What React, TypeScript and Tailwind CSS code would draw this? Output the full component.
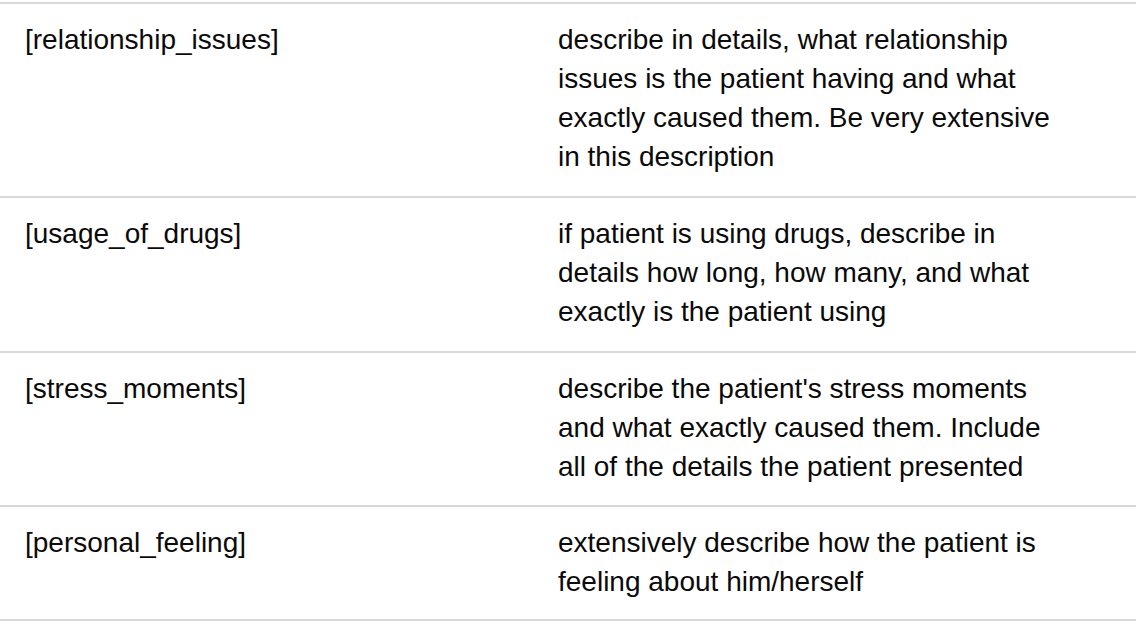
import React from 'react'

interface Field {
  key: string
  hint: string
  height: string
}

const fields: Field[] = [
  {
    key: '[relationship_issues]',
    hint: 'describe in details, what relationship issues is the patient having and what exactly caused them. Be very extensive in this description',
    height: 'h-[194px]',
  },
  {
    key: '[usage_of_drugs]',
    hint: 'if patient is using drugs, describe in details how long, how many, and what exactly is the patient using',
    height: 'h-[155px]',
  },
  {
    key: '[stress_moments]',
    hint: "describe the patient's stress moments and what exactly caused them. Include all of the details the patient presented",
    height: 'h-[154px]',
  },
  {
    key: '[personal_feeling]',
    hint: 'extensively describe how the patient is feeling about him/herself',
    height: 'h-[114px]',
  },
]

export default function App() {
  return (
    <div className="w-[1136px] h-[636px] bg-white pt-[2px] overflow-hidden font-['Liberation_Sans',Arial,sans-serif] text-[28px] leading-[39px] text-[#0a0a0a]">
      <div className="border-b-2 border-[#d8d8d8]">
        {fields.map((f) => (
          <div key={f.key} className={`grid grid-cols-[533px_1fr] border-t-2 border-[#d8d8d8] ${f.height}`}>
            <div className="px-[25px] pt-[16px]">{f.key}</div>
            <div className="pl-[25px] pr-[72px] pt-[16px]">{f.hint}</div>
          </div>
        ))}
      </div>
    </div>
  )
}
